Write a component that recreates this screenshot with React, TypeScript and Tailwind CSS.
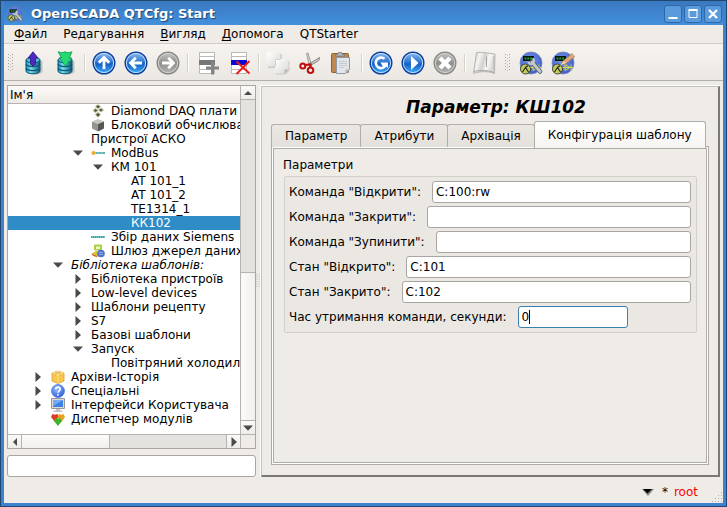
import type { ReactNode } from "react";

/* ---------- toolbar drawings ---------- */

const Svg = ({ children }: { children: ReactNode }) => (
  <svg viewBox="0 0 24 24" className="size-6 shrink-0" aria-hidden="true">
    {children}
  </svg>
);

const Gradients = () => (
  <svg width="0" height="0" className="absolute" aria-hidden="true">
    <defs>
      <linearGradient id="blueBall" x1="0" y1="0" x2="0" y2="1">
        <stop offset="0" stopColor="#8fbdf0" />
        <stop offset="0.45" stopColor="#2f78d0" />
        <stop offset="0.55" stopColor="#1560c4" />
        <stop offset="1" stopColor="#3fb4ff" />
      </linearGradient>
      <linearGradient id="greyBall" x1="0" y1="0" x2="0" y2="1">
        <stop offset="0" stopColor="#c8c8c8" />
        <stop offset="0.5" stopColor="#8f8f8d" />
        <stop offset="1" stopColor="#b4b4b2" />
      </linearGradient>
      <linearGradient id="cylinder" x1="0" y1="0" x2="1" y2="0">
        <stop offset="0" stopColor="#1f8fb0" />
        <stop offset="0.35" stopColor="#7fe0ee" />
        <stop offset="1" stopColor="#0f5674" />
      </linearGradient>
      <linearGradient id="paper" x1="0" y1="0" x2="1" y2="1">
        <stop offset="0" stopColor="#ffffff" />
        <stop offset="1" stopColor="#d8d8d6" />
      </linearGradient>
      <linearGradient id="book" x1="0" y1="0" x2="1" y2="0.3">
        <stop offset="0" stopColor="#bdbcb9" />
        <stop offset="0.3" stopColor="#f4f4f3" />
        <stop offset="0.55" stopColor="#d2d1ce" />
        <stop offset="0.75" stopColor="#f8f8f6" />
        <stop offset="1" stopColor="#d8d7d4" />
      </linearGradient>
      <radialGradient id="disc" cx="0.45" cy="0.4" r="0.6">
        <stop offset="0" stopColor="#7c9af0" />
        <stop offset="1" stopColor="#3d5fc8" />
      </radialGradient>
      <radialGradient id="help" cx="0.4" cy="0.3" r="0.7">
        <stop offset="0" stopColor="#9cc0ff" />
        <stop offset="1" stopColor="#2f62e0" />
      </radialGradient>
    </defs>
  </svg>
);

const Database = ({ children }: { children: ReactNode }) => (
  <Svg>
    <path d="M6 10v11c2 3.500 13 3.500 15.500 0V10z" fill="#777" opacity=".35" />
    <path d="M5 9v11c0 3.6 14 3.6 14 0V9z" fill="url(#cylinder)" stroke="#0d5876" />
    <path d="M5 13c1 3.4 13 3.4 14 0M5 17c1 3.4 13 3.4 14 0" fill="none" stroke="#075a7c" strokeWidth="1.2" />
    <ellipse cx="12" cy="9" rx="7" ry="2.8" fill="#58b9d0" stroke="#0d5876" />
    {children}
  </Svg>
);
const LoadIcon = () => (
  <Database>
    <path d="M12 .8l5 6.2h-2.6v6.5l-2.4 1.3-2.4-1.3V7H7z" fill="#5128c4" stroke="#2a1285" strokeWidth=".8" />
  </Database>
);
const SaveIcon = () => (
  <Database>
    <path d="M5 .8l4 1 3-1 3 1 4-1-2.600 6H18.500l-6 8.500L6.500 6.800h2z" fill="#25d873" stroke="#0b9c4b" strokeWidth=".8" />
  </Database>
);

const Ball = ({ grey, children }: { grey?: boolean; children: ReactNode }) => (
  <Svg>
    <circle cx="12" cy="12" r="10.8" fill={grey ? "url(#greyBall)" : "url(#blueBall)"} stroke={grey ? "#898987" : "#0d3f9c"} strokeWidth="1.4" />
    <circle cx="12" cy="12" r="9.6" fill="none" stroke={grey ? "#d0d0ce" : "#c3ddfa"} strokeWidth="1" />
    {children}
  </Svg>
);
const Arrow = ({ turn }: { turn: number }) => (
  <path d="M12 18V7M6.800 11.800L12 6.600l5.200 5.200" fill="none" stroke="#fff" strokeWidth="2.800" transform={`rotate(${turn} 12 12)`} />
);
const UpIcon = () => <Ball><Arrow turn={0} /></Ball>;
const BackIcon = () => <Ball><Arrow turn={-90} /></Ball>;
const ForwardIcon = () => <Ball grey><Arrow turn={90} /></Ball>;
const RefreshIcon = () => (
  <Ball>
    <path d="M15.500 7.800a5.300 5.300 0 1 0 1 7" fill="none" stroke="#fff" strokeWidth="2.600" />
    <path d="M11.500 11.500h7.500v5.500l-2.200-1.800-3 .3z" fill="#fff" />
  </Ball>
);
const PlayIcon = () => <Ball><path d="M10 5L17.500 12l-7.500 7z" fill="#fff" /></Ball>;
const StopIcon = () => <Ball grey><path d="M7 7l10 10M17 7L7 17" stroke="#fff" strokeWidth="4.400" /></Ball>;

const Rows = ({ fill }: { fill: string }) => (
  <>
    <path d="M4.500 1.500h15v21h-15z" fill="#fff" stroke="#b9b9b7" />
    <path d="M4 5.500h16M4 18.500h16" stroke="#b9b9b7" />
    <path d="M4 9h16v5H4z" fill={fill} />
  </>
);
const AddIcon = () => (
  <Svg>
    <Rows fill="#777775" />
    <path d="M17.500 10.500v13M11 17h13" stroke="#858583" strokeWidth="3" />
  </Svg>
);
const DeleteIcon = () => (
  <Svg>
    <Rows fill="#0909cf" />
    <path d="M9.500 10.500l13 12M22.500 10L9.500 23" stroke="#eb1c1c" strokeWidth="2" fill="none" />
  </Svg>
);

const CopyIcon = () => (
  <Svg>
    <path d="M2 3h14v10l-4 4H2z" fill="#999" opacity=".4" />
    <path d="M1 1h13.500v10.500l-4 4H1z" fill="url(#paper)" />
    <path d="M10.500 15.500v-4h4z" fill="#bdbdbb" />
    <path d="M10 10h13.500v9.500l-4 4H10z" fill="#999" opacity=".4" />
    <path d="M9 8h13.500v10.500l-4 4H9z" fill="url(#paper)" />
    <path d="M9.500 15.500v-7h5" stroke="#d0d0ce" fill="none" />
    <path d="M18.500 22.500v-4h4z" fill="#b5b5b3" />
  </Svg>
);
const CutIcon = () => (
  <Svg>
    <path d="M8.500 2.500l1.500-.5 3.500 12-2 1.500z" fill="#d9d9d7" stroke="#8d8d8b" strokeWidth=".8" />
    <path d="M21.500 6.500c.5 2-1 3.500-3 4.500l-7 4-1.500-1.500z" fill="#c8c8c6" stroke="#777" strokeWidth=".8" />
    <circle cx="4.800" cy="15" r="2.500" fill="none" stroke="#c00d0d" strokeWidth="2" />
    <circle cx="12.500" cy="19.300" r="2.800" fill="none" stroke="#c00d0d" strokeWidth="2" />
    <path d="M7 14l5.500-.5v3" stroke="#c00d0d" strokeWidth="2.200" fill="none" />
  </Svg>
);
const PasteIcon = () => (
  <Svg>
    <rect x="1.500" y="2.500" width="17" height="19" rx="1" fill="#bd874d" stroke="#8e6230" />
    <path d="M5.500 5V3.500h2l1-2h3l1 2h2V5z" fill="#bbb" stroke="#777" strokeWidth=".8" />
    <path d="M6.500 6.500h13v12l-4 4h-9z" fill="#e2e6eb" stroke="#8f98a3" />
    <path d="M9 10.500h8M9 12.500h8M9 14.500h8M9 16.500h5" stroke="#c3cad2" />
    <path d="M15.500 22.500v-4h4z" fill="#aeb6c0" />
  </Svg>
);
const ManualIcon = () => (
  <Svg>
    <path d="M4.500 1.500c6-.5 10 .5 18.500 1.500l-.5 19.500c-6-2.500-14-2.500-21 0z" fill="url(#book)" stroke="#b5b4b1" />
    <path d="M1.800 20.500c7-1.500 14-1.500 20.500 1" stroke="#a9a8a5" fill="none" />
    <path d="M14.500 5.500v10.500" stroke="#a5a4a1" />
    <path d="M21.500 5v14" stroke="#c2c1be" />
  </Svg>
);

const Disc = ({ children }: { children: ReactNode }) => (
  <>
    <circle cx="12" cy="12" r="11" fill="url(#disc)" stroke="#7a86b8" strokeWidth=".8" />
    <path d="M4 5h11v5H4z" fill="#06140a" />
    <path d="M5.500 7.500h8" stroke="#1d9c3c" strokeWidth="2" strokeDasharray="2 .8" />
    <path d="M11 16.500h11M14 13.500v6l5-3zM20 13.500v6" stroke="#d9dc50" fill="none" />
    <circle cx="6.500" cy="18" r="5" fill="#c3cc60" stroke="#23281a" strokeWidth=".8" />
    <path d="M3.500 21l3-4.500 3 4.500M6.500 16.500l2.500-2" stroke="#23281a" fill="none" strokeWidth="1.200" />
    {children}
  </>
);
const ConfigGlyph = () => (
  <Disc>
    <path d="M13 11l8 9.500" stroke="#5d646c" strokeWidth="4.500" strokeLinecap="round" />
    <path d="M13 11l8 9.500" stroke="#c2c8ce" strokeWidth="2.800" strokeLinecap="round" />
    <path d="M9.500 11c1 2.500 4 2.500 5 .5s0-3.500-1-4" stroke="#c2c8ce" strokeWidth="2.200" fill="none" />
  </Disc>
);
const ConfigIcon = () => <Svg><ConfigGlyph /></Svg>;
const VisionIcon = () => (
  <Svg>
    <Disc>
      <path d="M22.500 4L12 12.500" stroke="#8c6141" strokeWidth="4.600" />
      <path d="M22.500 4L12 12.500" stroke="#dba87c" strokeWidth="3.600" />
      <path d="M13 10l-4 4.500 5.500-2.500z" fill="#efd9b5" />
    </Disc>
  </Svg>
);

/* ---------- tree drawings ---------- */

const Mini = ({ children }: { children: ReactNode }) => (
  <svg viewBox="0 0 14 14" className="size-[14px] shrink-0" aria-hidden="true">{children}</svg>
);
const DiamondIcon = () => (
  <Mini>
    <g fill="#5f8a50" stroke="#b9a68a" strokeWidth=".8">
      <path d="M4.500 2.500L7 .8l2.500 1.700L7 4.500zM2 6.500l2.500-2L7 6.500l-2.500 2zM7.500 6l2.500-2 2.500 2L10 8zM4.500 10.500L7 8.500l2.500 2L7 13.200z" />
    </g>
    <path d="M6 2h2v1.500H6zM4 6h1.500v1H4zM9 5.500h1.500v1H9zM6 10h2v1.500H6z" fill="#31512d" />
  </Mini>
);
const CubeIcon = () => (
  <Mini>
    <path d="M1 3.500L7 1l6 2.500L7 6z" fill="#c4c4c0" />
    <path d="M1 3.500L7 6v7.500L1 10.500z" fill="#94948f" />
    <path d="M13 3.500L7 6v7.500l6-3z" fill="#565652" />
  </Mini>
);
const ModbusIcon = () => (
  <Mini>
    <circle cx="2.500" cy="7" r="2" fill="#f0a92c" />
    <path d="M4.500 7H14" stroke="#2b9ca6" strokeWidth="1.400" strokeDasharray="3 .3" />
  </Mini>
);
const SiemensIcon = () => (
  <Mini><path d="M0 7h14" stroke="#36a8a5" strokeWidth="2" strokeDasharray="1.700 .3" /></Mini>
);
const GateIcon = () => (
  <Mini>
    <path d="M3.500 1h7v5h-7z" fill="#8fd63b" stroke="#b9cf45" />
    <path d="M5 2.500h4V5H5z" fill="#f3f6cf" />
    <path d="M0 10l5-3 5 1v4l-6 1z" fill="#d3c43c" />
    <path d="M1 10.500l5 2" stroke="#d14b2f" />
    <circle cx="10" cy="9.500" r="3.800" fill="#5272c8" />
    <path d="M8 8.500h4M8 10.500h4" stroke="#8fa8e0" />
  </Mini>
);
const ArchiveIcon = () => (
  <Mini>
    <path d="M1 3l6-2 6 2v8l-6 2.500L1 11z" fill="#f8c84c" stroke="#d79f35" strokeWidth=".8" />
    <path d="M1 3l6 2 6-2-6-2z" fill="#ffeaa0" />
    <path d="M7 5v8" stroke="#fbe08d" />
    <path d="M4 2l6 2v2.500M10 2L4 4v2.500" stroke="#e9b565" fill="none" />
  </Mini>
);
const HelpIcon = () => (
  <Mini>
    <circle cx="7" cy="7" r="6.400" fill="url(#help)" stroke="#3e70df" strokeWidth=".8" />
    <path d="M4.800 5.200C5 2.300 9.400 2.500 9.200 5.200 9 6.800 7 6.900 7 8.800M7 10v1.700" stroke="#fff" strokeWidth="1.600" fill="none" />
  </Mini>
);
const MonitorIcon = () => (
  <Mini>
    <path d="M.5.500h13v10H.5z" fill="#dadada" stroke="#969696" />
    <path d="M2 2h10v7H2z" fill="#3f82e8" />
    <path d="M2 2h10L2 8z" fill="#78aaf5" />
    <path d="M5 11h4v1.500h2.500V14h-9v-1.500H5z" fill="#c3c3c3" />
  </Mini>
);
const ModulesIcon = () => (
  <Mini>
    <path d="M0 5l1.500-3 2.500.8L6.500 2 7.500 5 4 10z" fill="#e03a26" />
    <path d="M6.500 5L8 2l2.500.8L12.500 2 14 5l-3.500 5z" fill="#f0a020" />
    <path d="M3 9l1.800-3L7 6.800 9.200 6 11 9l-4 5z" fill="#3fb62a" />
  </Mini>
);

/* ---------- tree ---------- */

type Item = {
  level: number;
  text: string;
  icon?: ReactNode;
  open?: boolean;
  selected?: boolean;
  italic?: boolean;
};

const items: Item[] = [
  { level: 3, text: "Diamond DAQ плати", icon: <DiamondIcon /> },
  { level: 3, text: "Блоковий обчислювач", icon: <CubeIcon /> },
  { level: 3, text: "Пристрої АСКО" },
  { level: 3, text: "ModBus", icon: <ModbusIcon />, open: true },
  { level: 4, text: "КМ 101", open: true },
  { level: 5, text: "AT 101_1" },
  { level: 5, text: "AT 101_2" },
  { level: 5, text: "TE1314_1" },
  { level: 5, text: "КК102", selected: true },
  { level: 3, text: "Збір даних Siemens", icon: <SiemensIcon /> },
  { level: 3, text: "Шлюз джерел даних", icon: <GateIcon /> },
  { level: 2, text: "Бібліотека шаблонів:", open: true, italic: true },
  { level: 3, text: "Бібліотека пристроїв", open: false },
  { level: 3, text: "Low-level devices", open: false },
  { level: 3, text: "Шаблони рецепту", open: false },
  { level: 3, text: "S7", open: false },
  { level: 3, text: "Базові шаблони", open: false },
  { level: 3, text: "Запуск", open: true },
  { level: 4, text: "Повітряний холодильник" },
  { level: 1, text: "Архіви-Історія", icon: <ArchiveIcon />, open: false },
  { level: 1, text: "Спеціальні", icon: <HelpIcon />, open: false },
  { level: 1, text: "Інтерфейси Користувача", icon: <MonitorIcon />, open: false },
  { level: 1, text: "Диспетчер модулів", icon: <ModulesIcon /> },
];

const Triangle = ({ dir }: { dir: "up" | "down" | "left" | "right" }) => {
  const d = {
    up: "M1 7L5 3l4 4z",
    down: "M0 2.500h10L5 7.800z",
    left: "M7 1L3 5l4 4z",
    right: "M2.500 0v10L8 5z",
  }[dir];
  return (
    <svg viewBox="0 0 10 10" className="size-[10px] shrink-0" aria-hidden="true">
      <path d={d} fill="#4a4a4a" />
    </svg>
  );
};

const TreeRow = ({ item }: { item: Item }) => (
  <li
    role="treeitem"
    aria-selected={!!item.selected}
    aria-expanded={item.open}
    className={`flex h-[14px] items-center whitespace-nowrap leading-[14px] ${item.selected ? "bg-[#308cc6] text-white" : ""} ${item.italic ? "italic" : ""}`}
    style={{ paddingLeft: item.level * 20 }}
  >
    <span className="mr-[3px] flex w-5 shrink-0 justify-center">
      {item.open !== undefined && (
        <button type="button" aria-label={item.open ? "Згорнути" : "Розгорнути"} className="flex">
          <Triangle dir={item.open ? "down" : "right"} />
        </button>
      )}
    </span>
    {item.icon && <span className="w-5 shrink-0">{item.icon}</span>}
    {item.text}
  </li>
);

const ScrollButton = ({ dir, label, className }: { dir: "up" | "down" | "left" | "right"; label: string; className: string }) => (
  <button
    type="button"
    aria-label={label}
    className={`flex shrink-0 items-center justify-center border-[#b5b2af] bg-linear-to-b from-[#fbfaf9] to-[#eeece9] ${className}`}
  >
    <Triangle dir={dir} />
  </button>
);

const Navigator = () => (
  <aside className="flex w-[249px] shrink-0 flex-col gap-[6px]">
    <div className="flex flex-1 flex-col border border-[#aaa6a3] bg-white">
      <div className="flex min-h-0 flex-1">
        <div className="flex min-w-0 flex-1 flex-col">
          <div className="h-[18px] shrink-0 border-b border-[#b5b2af] bg-linear-to-b from-[#fcf9f7] to-[#eeebe7] pl-[2px] leading-[18px]">Ім'я</div>
          <ul role="tree" aria-label="Ім'я" className="flex-1 overflow-hidden">
            {items.map((item) => <TreeRow key={item.text} item={item} />)}
          </ul>
        </div>
        <div className="flex w-[15px] shrink-0 flex-col border-l border-[#b5b2af] bg-[#e3e2df]">
          <ScrollButton dir="up" label="Вгору" className="h-[14px] border-b" />
          <div className="flex-1" />
          <div className="h-[148px] shrink-0 border-t border-[#b5b2af] bg-linear-to-r from-[#fcfbfa] to-[#f1efed]" />
          <ScrollButton dir="down" label="Вниз" className="h-[14px] border-t" />
        </div>
      </div>
      <div className="flex h-[14px] shrink-0 border-t border-[#b5b2af] bg-[#e3e2df]">
        <ScrollButton dir="left" label="Ліворуч" className="w-[14px] border-r" />
        <div className="w-[88px] border-r border-[#b5b2af] bg-linear-to-b from-[#fcfbfa] to-[#f1efed]" />
        <div className="flex-1" />
        <ScrollButton dir="right" label="Праворуч" className="w-[14px] border-l" />
        <div className="w-[15px] border-l border-[#b5b2af] bg-[#efebe7]" />
      </div>
    </div>
    <input
      aria-label="Пошук"
      className="h-[22px] w-full rounded-[3px] border border-[#a8a5a2] bg-white px-1 outline-none"
    />
  </aside>
);

/* ---------- toolbar ---------- */

const ToolButton = ({ label, children }: { label: string; children: ReactNode }) => (
  <button type="button" aria-label={label} title={label} className="flex h-8 w-8 items-center justify-center">
    {children}
  </button>
);
const Separator = () => (
  <div className="flex w-[7px] justify-center">
    <div className="h-[18px] w-[2px] border-l border-[#d3cfcb] bg-white" />
  </div>
);
const Grip = () => (
  <svg viewBox="0 0 5 18" className="h-[18px] w-[5px]" aria-hidden="true">
    <path d="M.5 0v18M4.500 0v18" stroke="#a9a5a1" strokeDasharray="1 2" />
    <path d="M2.500 1v17" stroke="#c4c0bc" strokeDasharray="1 2" />
  </svg>
);

const Toolbar = () => (
  <div role="toolbar" className="flex h-[37px] items-center border-b border-[#b3afac] bg-linear-to-b from-[#f7f3ef] to-[#ebe7e3] pt-[2px] pl-1">
    <div className="flex w-[9px]"><Grip /></div>
    <ToolButton label="Завантажити"><LoadIcon /></ToolButton>
    <ToolButton label="Зберегти"><SaveIcon /></ToolButton>
    <Separator />
    <ToolButton label="Вгору"><UpIcon /></ToolButton>
    <ToolButton label="Назад"><BackIcon /></ToolButton>
    <ToolButton label="Вперед"><ForwardIcon /></ToolButton>
    <Separator />
    <ToolButton label="Додати"><AddIcon /></ToolButton>
    <ToolButton label="Видалити"><DeleteIcon /></ToolButton>
    <Separator />
    <ToolButton label="Копіювати"><CopyIcon /></ToolButton>
    <ToolButton label="Вирізати"><CutIcon /></ToolButton>
    <ToolButton label="Вставити"><PasteIcon /></ToolButton>
    <Separator />
    <ToolButton label="Оновити"><RefreshIcon /></ToolButton>
    <ToolButton label="Запустити"><PlayIcon /></ToolButton>
    <ToolButton label="Зупинити"><StopIcon /></ToolButton>
    <Separator />
    <ToolButton label="Посібник"><ManualIcon /></ToolButton>
    <div className="flex w-[15px] justify-center"><Grip /></div>
    <ToolButton label="QTCfg"><ConfigIcon /></ToolButton>
    <ToolButton label="Vision"><VisionIcon /></ToolButton>
  </div>
);

/* ---------- title and menu ---------- */

const WindowButton = ({ label, children }: { label: string; children: ReactNode }) => (
  <button type="button" aria-label={label} className="flex size-[18px] items-center justify-center rounded-[3px] border border-[#2f68a8] bg-[#5b9bdc]">
    <svg viewBox="0 0 12 12" className="size-3" fill="none" stroke="#fff" aria-hidden="true">{children}</svg>
  </button>
);

const TitleBar = () => (
  <header className="flex h-[24px] items-center bg-linear-to-b from-[#3a78bf] to-[#4390dd] pt-px pr-px pl-[3px]">
    <svg viewBox="0 0 24 24" className="size-4 shrink-0" aria-hidden="true"><ConfigGlyph /></svg>
    <h1 className="ml-2 flex-1 text-[13px] font-bold text-white [text-shadow:1px_1px_1px_#1c4474]">OpenSCADA QTCfg: Start</h1>
    <div className="flex gap-[2px]">
      <WindowButton label="Згорнути"><path d="M1.500 10h9" strokeWidth="2" /></WindowButton>
      <WindowButton label="Розгорнути"><path d="M2 2.500h8v7H2z" /><path d="M1.500 2h9" strokeWidth="2" /></WindowButton>
      <WindowButton label="Закрити"><path d="M2 2l8 8M10 2l-8 8" strokeWidth="2.200" /></WindowButton>
    </div>
  </header>
);

const menus = [
  { key: "Ф", rest: "айл" },
  { key: "", rest: "Редагування" },
  { key: "В", rest: "игляд" },
  { key: "Д", rest: "опомога" },
  { key: "", rest: "QTStarter" },
];

const MenuBar = () => (
  <nav className="flex h-[19px] border-b border-[#cfcbc7] pl-[2px]">
    {menus.map((m) => (
      <button key={m.rest} type="button" className="px-2 leading-[18px]">
        <span className="underline underline-offset-2">{m.key}</span>
        {m.rest}
      </button>
    ))}
  </nav>
);

/* ---------- parameter page ---------- */

const fields = [
  { id: "open", label: "Команда \"Відкрити\":", value: "C:100:rw" },
  { id: "close", label: "Команда \"Закрити\":", value: "" },
  { id: "stop", label: "Команда \"Зупинити\":", value: "" },
  { id: "opened", label: "Стан \"Відкрито\":", value: "C:101" },
  { id: "closed", label: "Стан \"Закрито\":", value: "C:102" },
];

const Tab = ({ children }: { children: ReactNode }) => (
  <button
    type="button"
    role="tab"
    aria-selected={false}
    className="-mr-px h-[23px] rounded-t-[3px] border border-b-0 border-[#b0adaa] bg-linear-to-b from-[#ebe8e4] to-[#e4e1dd] px-[13px]"
  >
    {children}
  </button>
);

const ParameterPage = () => (
  <main className="flex min-w-0 flex-1 flex-col border-t border-r-2 border-b-2 border-l border-t-[#c4c0bc] border-r-[#7b7875] border-b-[#7b7875] border-l-[#c4c0bc] px-[9px] pt-[9px] pb-[10px]">
    <h2 className="h-[25px] pl-3 text-center text-[17px] leading-[22px] font-bold italic">Параметр: КШ102</h2>
    <div role="tablist" className="z-10 -mb-px flex items-end">
      <Tab>Параметр</Tab>
      <Tab>Атрибути</Tab>
      <Tab>Архівація</Tab>
      <button
        type="button"
        role="tab"
        aria-selected={true}
        className="-mb-px h-[27px] rounded-t-[3px] border border-b-0 border-[#b0adaa] bg-linear-to-b from-white to-[#f6f4f2] px-[13px]"
      >
        Конфігурація шаблону
      </button>
    </div>
    <div role="tabpanel" className="flex flex-1 border border-[#aeaba8] bg-white p-px">
      <div className="flex-1 border border-[#aeaba8] bg-[#efebe7] px-[9px] pt-[7px]">
        <fieldset>
          <legend className="h-[18px] leading-[18px]">Параметри</legend>
          <div className="mt-[2px] ml-px flex flex-col gap-[3px] rounded-[2px] border border-[#d3cfcb] bg-[#ebe8e4] px-[4px] py-1">
            {fields.map((f) => (
              <div key={f.id} className="flex items-center gap-[11px]">
                <label htmlFor={f.id} className="shrink-0">{f.label}</label>
                <input
                  id={f.id}
                  defaultValue={f.value}
                  className="mr-[1px] h-[22px] min-w-0 flex-1 rounded-[3px] border border-[#a8a5a2] bg-white px-[3px] outline-none"
                />
              </div>
            ))}
            <div className="flex items-center gap-[11px]">
              <label htmlFor="hold" className="shrink-0">Час утримання команди, секунди:</label>
              <div className="relative">
                <input
                  id="hold"
                  defaultValue="0"
                  className="block h-[22px] w-[110px] rounded-[3px] border border-[#3a7fae] bg-white px-[3px] outline-none"
                />
                <span className="absolute top-1 left-[11px] h-[14px] w-px bg-black" />
              </div>
            </div>
          </div>
        </fieldset>
      </div>
    </div>
  </main>
);

const StatusBar = () => (
  <footer className="flex h-[26px] shrink-0 items-center justify-end pt-[3px]">
    <svg viewBox="0 0 12 8" className="mr-[8px] h-2 w-3" aria-hidden="true">
      <path d="M0 1h12L6 8z" fill="#8a8a88" />
      <path d="M1 1h9L5.500 5.500z" fill="#000" />
    </svg>
    <span>*</span>
    <span className="ml-[6px] text-[#f00]">root</span>
    <svg viewBox="0 0 12 12" className="ml-[13px] size-3 self-end" fill="#b3afab" aria-hidden="true">
      {[1, 4, 7, 10].map((x) => [1, 4, 7, 10].filter((y) => x + y >= 11).map((y) => (
        <rect key={`${x}-${y}`} x={x} y={y} width="1" height="1" />
      )))}
    </svg>
  </footer>
);

export default function App() {
  return (
    <div className="flex min-h-screen flex-col border border-[#20486f] bg-[#3c82cf] px-[3px] pb-[3px] font-['DejaVu_Sans',sans-serif] text-[12px] text-black">
      <Gradients />
      <TitleBar />
      <div className="flex flex-1 flex-col bg-[#efebe7]">
        <MenuBar />
        <Toolbar />
        <div className="flex flex-1 pt-[4px] pr-[3px] pl-[3px]">
          <Navigator />
          <div className="flex w-[4px] items-center justify-center"><Grip /></div>
          <div className="flex min-w-0 flex-1 border-t border-l border-white">
            <ParameterPage />
          </div>
        </div>
        <StatusBar />
      </div>
    </div>
  );
}
